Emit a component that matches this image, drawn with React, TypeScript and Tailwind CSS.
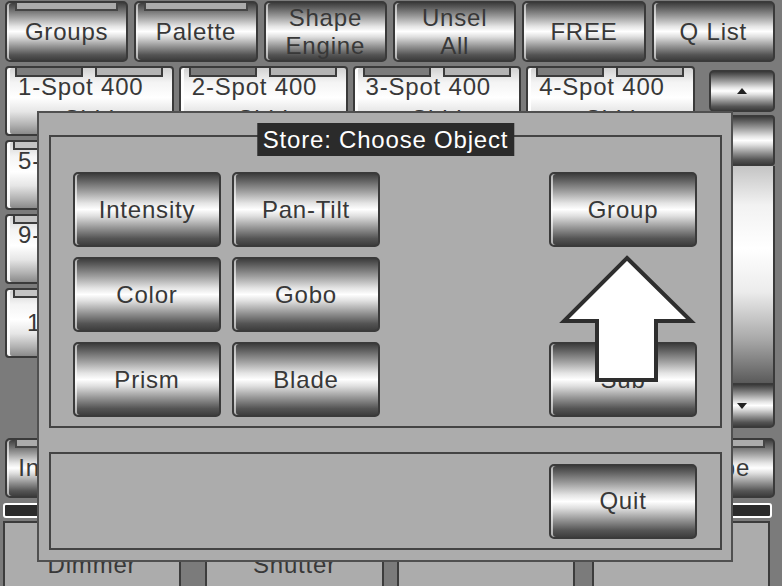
const chrome =
  "bg-[linear-gradient(180deg,#3e3e3e_0%,#5c5c5c_8%,#9c9c9c_24%,#e4e4e4_41%,#ffffff_50%,#e0e0e0_59%,#909090_77%,#545454_91%,#3e3e3e_100%)]";
const label = "text-[24px] leading-[28px] tracking-[0.8px] text-[#383838]";

// Chrome console key with optional tab on top
function Key({
  text,
  tab,
  className = "",
}: {
  text: string;
  tab?: boolean;
  className?: string;
}) {
  return (
    <div
      className={`relative flex items-center justify-center rounded-[5px] border-2 border-[#3a3a3a] text-center whitespace-pre-line shadow-[inset_2px_0_0_rgba(255,255,255,0.6)] ${chrome} ${label} ${className}`}
    >
      {tab && (
        <div className="absolute top-0 right-[8px] left-[8px] h-[8px] border-2 border-t-0 border-[#454545] bg-[#ababab]" />
      )}
      <span className="relative">{text}</span>
    </div>
  );
}

// Fixture tile in the group grid (tiles fully under the dialog carry no label)
function Fixture({ name, row, hidden }: { name: string; row: number; hidden: boolean }) {
  const single = row === 3;
  return (
    <div className="relative overflow-hidden rounded-[4px] border-2 border-[#3a3a3a] bg-[linear-gradient(180deg,#d2d2d2_0%,#f4f4f4_22%,#ffffff_45%,#e6e6e6_66%,#b2b2b2_86%,#8a8a8a_100%)] shadow-[inset_3px_0_0_rgba(255,255,255,0.9)]">
      {row === 0 ? (
        <>
          <div className="absolute top-0 left-[8px] h-[9px] w-[68px] border-2 border-t-0 border-[#3c3c3c] bg-[#7c7c7c]" />
          <div className="absolute top-0 left-[88px] h-[9px] w-[68px] border-2 border-t-0 border-[#3c3c3c] bg-[#b4b4b4]" />
        </>
      ) : (
        <div className="absolute top-0 left-[6px] h-[8px] w-[70px] border-2 border-t-0 border-[#3c3c3c] bg-[#c4c4c4]" />
      )}
      {hidden ? null : single ? (
        <div className={`flex h-full items-center pl-[20px] ${label}`}>{name}</div>
      ) : (
        <div className={`pt-[5px] ${label}`}>
          <div className="pl-[11px]">{name}</div>
          <div className="mt-[4px] text-center">Shld</div>
        </div>
      )}
    </div>
  );
}

export default function App() {
  const top = ["Groups", "Palette", "Shape\nEngine", "Unsel\nAll", "FREE", "Q List"];
  const attrs = ["Intensity", "Pan-Tilt", "Color", "Gobo", "Prism", "Shape"];
  const fixtures = Array.from({ length: 16 }, (_, i) => `${i + 1}-Spot 400`);

  return (
    <div className="relative h-[586px] w-[782px] overflow-hidden bg-[#7b7b7b] font-['Liberation_Sans','Arial',sans-serif]">
      {/* top key row */}
      <div className="grid h-[62px] grid-cols-6 gap-x-[6px] pt-[1px] pr-[7px] pl-[5px]">
        {top.map((t, i) => (
          <Key key={t} text={t} tab={i < 2} />
        ))}
      </div>

      {/* fixtures + scroller */}
      <div className="mt-[4px] flex h-[362px] pl-[5px]">
        <div className="grid h-[292px] w-[690px] grid-cols-4 grid-rows-4 gap-x-[5px] gap-y-[4px]">
          {fixtures.map((f, i) => (
            <Fixture key={f} name={f} row={Math.floor(i / 4)} hidden={i >= 4 && i % 4 !== 0} />
          ))}
        </div>
        <div className="ml-[14px] flex w-[66px] flex-col pt-[4px]">
          <div className={`flex h-[42px] items-center justify-center rounded-[5px] border-2 border-[#3a3a3a] ${chrome}`}>
            <svg width="10" height="6" viewBox="0 0 10 6">
              <path d="M5 0 L10 6 L0 6 Z" fill="#222" />
            </svg>
          </div>
          <div className={`mt-[3px] h-[51px] rounded-[4px] border-2 border-[#3a3a3a] ${chrome}`} />
          <div className="h-[217px] border-x-2 border-[#3a3a3a] bg-[linear-gradient(180deg,#c4c4c4_0%,#f2f2f2_18%,#ffffff_38%,#ececec_58%,#a8a8a8_80%,#5a5a5a_100%)]" />
          <div className={`flex h-[45px] items-center justify-center rounded-b-[5px] border-2 border-[#3a3a3a] ${chrome}`}>
            <svg width="10" height="6" viewBox="0 0 10 6">
              <path d="M0 0 L10 0 L5 6 Z" fill="#222" />
            </svg>
          </div>
        </div>
      </div>

      {/* attribute key row */}
      <div className="mt-[10px] grid h-[60px] grid-cols-6 gap-x-[6px] pr-[7px] pl-[5px]">
        {attrs.map((t) => (
          <Key key={t} text={t} tab />
        ))}
      </div>

      {/* black bar */}
      <div className="mt-[5px] ml-[3px] h-[15px] w-[769px] rounded-[3px] border-2 border-white bg-[#2b2b2b]" />

      {/* bottom fader labels */}
      <div className={`mt-[3px] flex pl-[3px] ${label}`}>
        <div className="h-[80px] w-[178px] border-2 border-[#3c3c3c] bg-[#acacac] pt-[28px] text-center">Dimmer</div>
        <div className="ml-[24px] h-[80px] w-[179px] border-2 border-[#3c3c3c] bg-[#acacac] pt-[28px] text-center">Shutter</div>
        <div className="ml-[13px] h-[80px] w-[178px] border-2 border-[#3c3c3c] bg-[#acacac]" />
        <div className="ml-[17px] h-[80px] w-[178px] border-2 border-[#3c3c3c] bg-[#acacac]" />
      </div>

      {/* modal dialog */}
      <div className="absolute top-[111px] left-[37px] flex h-[451px] w-[696px] flex-col gap-[24px] border-2 border-[#505050] bg-[#acacac] pt-[22px] pr-[9px] pb-[10px] pl-[10px]">
        <div className="relative h-[293px] border-2 border-[#444] pt-[35px] pr-[23px] pl-[22px]">
          <div className="absolute top-[-14px] left-1/2 flex h-[33px] -translate-x-1/2 items-center bg-[#2b2b2b] px-[6px] text-[24px] leading-[28px] tracking-[0.8px] whitespace-nowrap text-white">
            Store: Choose Object
          </div>
          <div className="grid grid-cols-[148px_148px_1fr_148px] grid-rows-[75px_75px_75px] gap-x-[11px] gap-y-[10px]">
            <Key text="Intensity" />
            <Key text="Pan-Tilt" />
            <div />
            <Key text="Group" />
            <Key text="Color" />
            <Key text="Gobo" />
            <div />
            <div />
            <Key text="Prism" />
            <Key text="Blade" />
            <div />
            <Key text="Sub" />
          </div>
        </div>
        <div className="flex h-[98px] items-center justify-end border-2 border-[#444] pr-[23px]">
          <Key text="Quit" className="h-[75px] w-[148px]" />
        </div>
      </div>

      {/* pointer arrow */}
      <svg
        className="pointer-events-none absolute top-[252px] left-[556px]"
        width="142"
        height="134"
        viewBox="556 252 142 134"
      >
        <polygon
          points="627,258 691,321 656,321 656,380 597,380 597,321 564,321"
          fill="#fff"
          stroke="#2e2e2e"
          strokeWidth="4"
        />
      </svg>
    </div>
  );
}
